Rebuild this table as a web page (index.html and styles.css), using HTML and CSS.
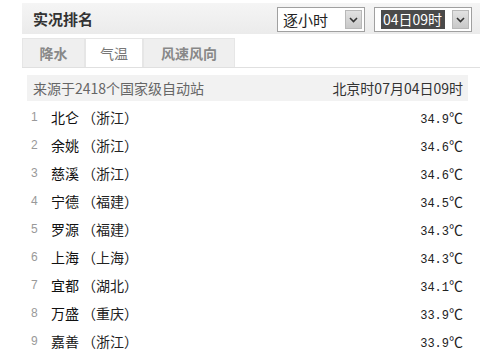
FILE: index.html
```html
<!DOCTYPE html>
<html lang="zh-CN">
<head>
<meta charset="utf-8">
<link rel="stylesheet" href="styles.css">
</head>
<body>
<div class="panel">
  <div class="header">
    <div class="title">实况排名</div>
    <div class="selects">
      <div class="sel sel-mode">
        <span class="sel-text">逐小时</span>
        <span class="sel-btn"><svg width="9" height="6" viewBox="0 0 9 6"><path d="M1 1 L4.5 4.5 L8 1" fill="none" stroke="#333" stroke-width="1.6"/></svg></span>
      </div>
      <div class="sel sel-time">
        <span class="sel-text hl">04日09时</span>
        <span class="sel-btn"><svg width="9" height="6" viewBox="0 0 9 6"><path d="M1 1 L4.5 4.5 L8 1" fill="none" stroke="#333" stroke-width="1.6"/></svg></span>
      </div>
    </div>
  </div>
  <div class="tabs">
    <div class="tab tab-rain">降水</div>
    <div class="tab tab-temp active">气温</div>
    <div class="tab tab-wind">风速风向</div>
  </div>
  <div class="content">
    <div class="info">
      <span class="src">来源于2418个国家级自动站</span>
      <span class="time">北京时07月04日09时</span>
    </div>
    <div class="rows">
      <div class="row"><span class="num">1</span><span class="name">北仑</span><span class="prov">（浙江）</span><span class="val">34.9<span class="unit">℃</span></span></div>
      <div class="row"><span class="num">2</span><span class="name">余姚</span><span class="prov">（浙江）</span><span class="val">34.6<span class="unit">℃</span></span></div>
      <div class="row"><span class="num">3</span><span class="name">慈溪</span><span class="prov">（浙江）</span><span class="val">34.6<span class="unit">℃</span></span></div>
      <div class="row"><span class="num">4</span><span class="name">宁德</span><span class="prov">（福建）</span><span class="val">34.5<span class="unit">℃</span></span></div>
      <div class="row"><span class="num">5</span><span class="name">罗源</span><span class="prov">（福建）</span><span class="val">34.3<span class="unit">℃</span></span></div>
      <div class="row"><span class="num">6</span><span class="name">上海</span><span class="prov">（上海）</span><span class="val">34.3<span class="unit">℃</span></span></div>
      <div class="row"><span class="num">7</span><span class="name">宜都</span><span class="prov">（湖北）</span><span class="val">34.1<span class="unit">℃</span></span></div>
      <div class="row"><span class="num">8</span><span class="name">万盛</span><span class="prov">（重庆）</span><span class="val">33.9<span class="unit">℃</span></span></div>
      <div class="row"><span class="num">9</span><span class="name">嘉善</span><span class="prov">（浙江）</span><span class="val">33.9<span class="unit">℃</span></span></div>
    </div>
  </div>
</div>
</body>
</html>
```
FILE: styles.css
```css
html, body {
  margin: 0;
  padding: 0;
  background: #ffffff;
}
body {
  font-family: "Noto Sans CJK SC", "Liberation Sans", sans-serif;
  color: #333;
}
.panel {
  width: 458px;
  margin: 3px 0 0 22px;
}
.header {
  height: 31px;
  background: linear-gradient(#f5f5f5, #ebebeb);
  display: flex;
  align-items: center;
  justify-content: space-between;
  padding: 0 8px 0 11px;
}
.title {
  font-size: 15px;
  font-weight: bold;
  color: #333;
  line-height: 1;
}
.selects {
  display: flex;
  gap: 9px;
  margin-top: 2px;
}
.sel {
  height: 25px;
  box-sizing: border-box;
  border: 1px solid #a0a0a0;
  background: #fff;
  display: flex;
  align-items: center;
  justify-content: space-between;
  padding: 0 2px 0 5px;
}
.sel-mode { width: 88px; }
.sel-time { width: 98px; padding-left: 6px; }
.sel-text {
  font-size: 15px;
  line-height: 19px;
  color: #222;
  white-space: nowrap;
}
.sel-text.hl {
  background: #4a4a4a;
  color: #fff;
  font-size: 14px;
  padding: 0 3px 0 2px;
}
.sel-btn {
  width: 17px;
  height: 19px;
  box-sizing: border-box;
  background: linear-gradient(#e2e2e2, #c8c8c8);
  border: 1px solid #b8b8b8;
  display: flex;
  align-items: center;
  justify-content: center;
}
.tabs {
  margin-top: 4px;
  height: 29px;
  display: flex;
  border-bottom: 1px solid #e0e0e0;
}
.tab {
  height: 29px;
  box-sizing: border-box;
  display: flex;
  align-items: center;
  justify-content: center;
  white-space: nowrap;
  font-size: 14px;
  font-weight: bold;
  color: #888;
  background: #efefef;
  border: 1px solid #e6e6e6;
  border-bottom: none;
}
.tab-rain { width: 63px; }
.tab-temp { width: 58px; }
.tab-wind { width: 92px; }
.tab.active {
  background: #fff;
  font-weight: normal;
  color: #777;
}
.content {
  margin: 7px 12px 0 5px;
}
.info {
  height: 26px;
  background: #f2f2f2;
  display: flex;
  align-items: center;
  justify-content: space-between;
  padding: 0 5px 0 6px;
  font-size: 14px;
}
.src { color: #666; }
.time { color: #333; }
.rows {
  margin-top: 2px;
}
.row {
  height: 28px;
  display: flex;
  align-items: center;
  padding: 0 5px 0 4px;
}
.num {
  width: 20px;
  font-family: "Liberation Sans", sans-serif;
  font-size: 12px;
  color: #999;
}
.name {
  font-size: 14px;
  color: #111;
}
.prov {
  font-size: 14px;
  color: #222;
  margin-left: 3px;
}
.val {
  margin-left: auto;
  font-family: "Liberation Mono", monospace;
  font-size: 12px;
  color: #222;
}
.unit {
  font-family: "Noto Sans CJK SC", sans-serif;
  font-size: 14px;
}
```
